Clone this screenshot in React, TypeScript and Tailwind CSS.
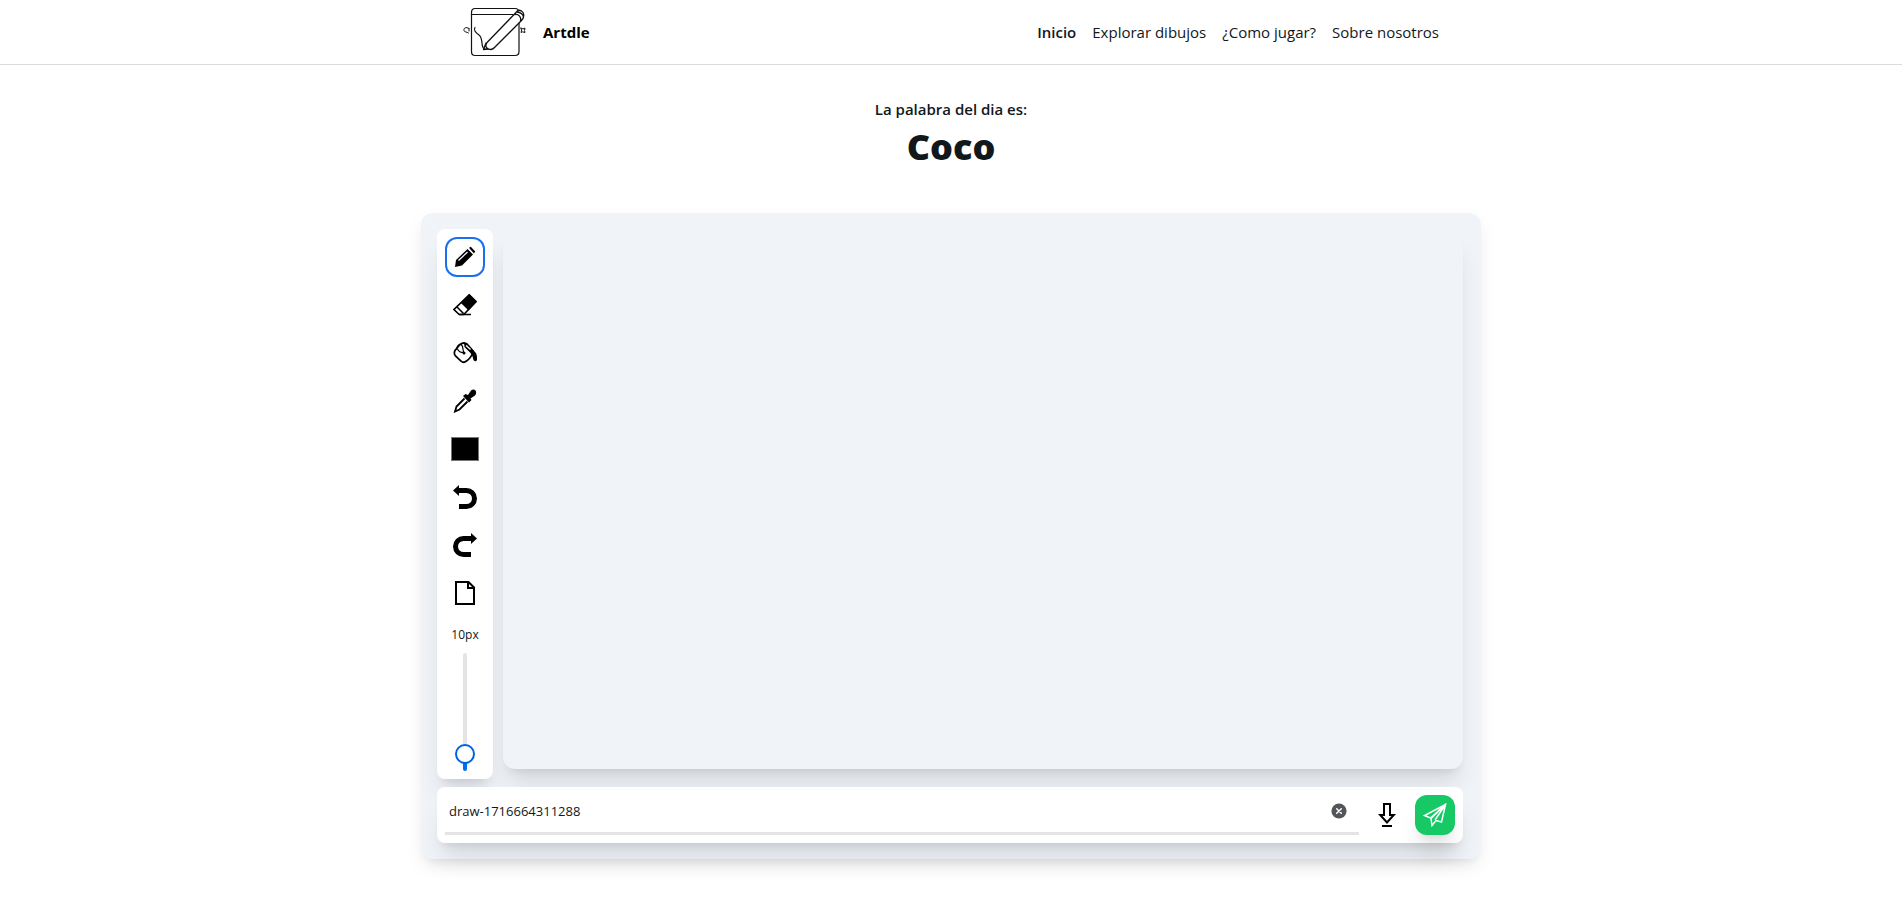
import { useState } from "react";
import type { ReactNode } from "react";

const links = ["Inicio", "Explorar dibujos", "¿Como jugar?", "Sobre nosotros"];

function Icon({ children }: { children: ReactNode }) {
  return (
    <svg viewBox="0 0 24 24" className="size-6" fill="none" stroke="currentColor" aria-hidden="true">
      {children}
    </svg>
  );
}

function Logo() {
  return (
    <svg viewBox="0 0 64 56" className="h-14 w-16" fill="none" stroke="#111" strokeWidth="1.2" strokeLinecap="round" strokeLinejoin="round" aria-hidden="true">
      <path d="M12 4.500H52Q56 4.500 56 8.500V47.500Q56 51.500 52 51.500H12Q8.500 51.500 8.500 47.500V8.500Q8.500 4.500 12 4.500Z" />
      <path d="M8.500 10.500H50" />
      <path d="M12 23.500C10 26 13 29 16 31C20 34 18 40 20 43.500C20.500 45 22 45.500 24 45" />
      <path fill="#fff" stroke="none" d="M24 38.500L52 9.500C54 6 58 6 60 9C61.500 12 60.500 14 58.500 16L31 43C29 45.500 26 45 22 45.500Z" />
      <path d="M24.500 38L53 8.500C54.500 5.500 58 5.500 60 8.500C61.800 12 60.500 14.500 58 17L31.500 43.500C29 46.500 24 46 23 42.500C22.500 40.500 23 39.500 24.500 38ZM23 39L20.500 45.500L25 45M51.500 10.500C55.500 9.500 58.500 13 57.500 17M54 8C57.500 8 60.500 11 60.500 13.500" strokeWidth="1.300" />
      <path d="M6 24.500C3 22.500 .500 24 1 26.500C1.500 28.500 3.500 27.500 5.500 29M6 24.500V27M58 24L60 25L62 24L61.500 26.500L62 28.500L59.500 27.800L58 28.500L58.500 26.500Z" strokeWidth="1" />
    </svg>
  );
}

const tools: { name: string; icon: ReactNode }[] = [
  {
    name: "Lápiz",
    icon: (
      <Icon>
        <path d="M2 22L3 15L14.500 4L20 9.500L9 20.500Z" fill="currentColor" stroke="none" />
        <path d="M16 2.800L17.800 1.800L22.200 6.500L21 8.500Z" fill="currentColor" stroke="none" />
        <path d="M5.500 15.500L14.500 7" stroke="#fff" strokeWidth="1.200" />
      </Icon>
    ),
  },
  {
    name: "Borrador",
    icon: (
      <Icon>
        <path d="M16.200 1.800L23 8.600L10.800 21.500H6.200L1 16.500Z" strokeWidth="1.600" />
        <path d="M16.200 1L24 8.600L15.500 17.500L7.700 9.800Z" fill="currentColor" stroke="none" />
        <path d="M4 14L10.500 20.500M6 21.500H18" strokeWidth="1.500" />
      </Icon>
    ),
  },
  {
    name: "Rellenar",
    icon: (
      <Icon>
        <path d="M7 3.500Q11 .500 14.500 3.500L20.500 10.500Q18 17 13.500 20Q10.500 22.500 8 20L2.500 15Q.500 12.500 2 9.500Z" strokeWidth="1.700" />
        <path d="M3.500 8.500C4.500 3 8 2 9.500 5.500L10.500 11M4.500 8C6 11 9 12 12 11.500" strokeWidth="1.200" />
        <path d="M11 1.500L23 12Q24.500 16 24 19Q22.500 21.500 20.500 19Q20 15 17.500 12L11.500 6Z" fill="currentColor" stroke="none" />
        <circle cx="11" cy="12" r="1.500" fill="currentColor" stroke="none" />
        <path d="M13 4.500L17.500 8.500" stroke="#fff" strokeWidth="1.300" />
      </Icon>
    ),
  },
  {
    name: "Cuentagotas",
    icon: (
      <Icon>
        <path d="M15 6L18 1.500Q20.500-.500 22.500 1.500Q24 4 22 6.500L17.500 9.500L18.500 11L16 13.500L10 7L12.500 5Z" fill="currentColor" stroke="none" />
        <path d="M11.500 9.500L3.500 17.500L2 22.500L6.500 20.500L14.500 12.500" strokeWidth="1.800" />
      </Icon>
    ),
  },
];

const actions: { name: string; icon: ReactNode }[] = [
  {
    name: "Deshacer",
    icon: (
      <Icon>
        <path d="M4 5.500H13.500A8 8 0 0 1 13.500 21.500H6" strokeWidth="5" />
        <path d="M0 5.500L6 0V11Z" fill="currentColor" stroke="none" />
      </Icon>
    ),
  },
  {
    name: "Rehacer",
    icon: (
      <Icon>
        <path d="M20 5.500H10.500A8 8 0 0 0 10.500 21.500H18" strokeWidth="5" />
        <path d="M24 5.500L18 0V11Z" fill="currentColor" stroke="none" />
      </Icon>
    ),
  },
  {
    name: "Nueva hoja",
    icon: (
      <Icon>
        <path d="M3 1H15.500L21 6.500V23H3ZM15 1V7H21" strokeWidth="2" />
      </Icon>
    ),
  },
];

const toolButton = "flex size-10 items-center justify-center rounded-xl text-black";

export default function App() {
  const [tool, setTool] = useState("Lápiz");
  const [color, setColor] = useState("#000000");
  const [size, setSize] = useState(10);
  const [name, setName] = useState("draw-1716664311288");

  return (
    <div className="min-h-screen bg-white font-['Segoe_UI','Open_Sans',sans-serif] text-[#11181c]">
      <header className="border-b border-[#dcdcdd]">
        <div className="mx-auto flex h-16 max-w-5xl items-center justify-between px-6">
          <a href="#inicio" className="flex items-center gap-4 text-[15px] font-bold text-black">
            <Logo />
            Artdle
          </a>
          <nav className="flex gap-4 text-[15px]">
            {links.map((label, i) => (
              <a key={label} href="#inicio" className={i === 0 ? "font-semibold" : ""}>
                {label}
              </a>
            ))}
          </nav>
        </div>
      </header>

      <main className="flex flex-col items-center px-4 pt-8">
        <p className="text-[15px] leading-6 font-semibold">La palabra del dia es:</p>
        <h1 className="mt-1.5 text-4xl leading-10 font-extrabold">Coco</h1>

        <section className="mt-[46px] flex w-full max-w-[1060px] flex-col gap-2 rounded-xl bg-[#f0f4f9] py-4 pr-[18px] pl-4 shadow-[0_8px_18px_-1px_rgb(0_0_0/0.08),0_6px_10px_-6px_rgb(0_0_0/0.1)]">
          <div className="flex items-start gap-2.5">
            <div className="flex w-14 shrink-0 flex-col items-center gap-2 rounded-lg bg-white p-2 shadow-xl">
              {tools.map((t) => (
                <button
                  key={t.name}
                  type="button"
                  aria-label={t.name}
                  onClick={() => setTool(t.name)}
                  className={tool === t.name ? `${toolButton} border-2 border-[#1c70f0]` : toolButton}
                >
                  {t.icon}
                </button>
              ))}
              <div className="flex size-10 items-center justify-center">
                <input
                  type="color"
                  aria-label="Color"
                  value={color}
                  onChange={(e) => setColor(e.target.value)}
                  className="h-6 w-7 appearance-none bg-transparent p-0 [&::-webkit-color-swatch]:border-[#777] [&::-webkit-color-swatch]:rounded-none [&::-webkit-color-swatch-wrapper]:p-0"
                />
              </div>
              {actions.map((a) => (
                <button key={a.name} type="button" aria-label={a.name} className={toolButton}>
                  {a.icon}
                </button>
              ))}
              <label htmlFor="grosor" className="pt-1 text-xs leading-5">
                {size}px
              </label>
              <input
                id="grosor"
                type="range"
                min={3}
                max={100}
                value={size}
                onChange={(e) => setSize(Number(e.target.value))}
                className="h-[118px] w-5 appearance-none bg-transparent [direction:rtl] [writing-mode:vertical-lr] [&::-webkit-slider-runnable-track]:w-1 [&::-webkit-slider-runnable-track]:rounded-full [&::-webkit-slider-runnable-track]:bg-[linear-gradient(to_top,#006fee_14%,#e4e4e7_14%)] [&::-webkit-slider-thumb]:-ml-2 [&::-webkit-slider-thumb]:size-5 [&::-webkit-slider-thumb]:appearance-none [&::-webkit-slider-thumb]:rounded-full [&::-webkit-slider-thumb]:border-2 [&::-webkit-slider-thumb]:border-[#0060e6] [&::-webkit-slider-thumb]:bg-white"
              />
            </div>
            <canvas width={960} height={540} className="aspect-video min-w-0 flex-1 rounded-xl bg-[#f0f4f9] shadow-xl" />
          </div>

          <form className="flex gap-2 rounded-lg bg-white p-2 shadow-xl" onSubmit={(e) => e.preventDefault()}>
            <div className="flex flex-1 items-start border-b-3 border-[#e4e4e7] pr-3 pl-1">
              <input
                aria-label="Nombre del dibujo"
                value={name}
                onChange={(e) => setName(e.target.value)}
                className="h-8 min-w-0 flex-1 bg-transparent text-[13px] outline-none"
              />
              <button type="button" aria-label="Borrar nombre" onClick={() => setName("")} className="my-2 size-4">
                <svg viewBox="0 0 16 16" className="size-4" aria-hidden="true">
                  <circle cx="8" cy="8" r="7.600" fill="#52565a" />
                  <path d="M5.700 5.700L10.300 10.300M10.300 5.700L5.700 10.300" stroke="#fff" strokeWidth="1.500" strokeLinecap="round" />
                </svg>
              </button>
            </div>
            <button type="button" aria-label="Descargar" className={toolButton}>
              <Icon>
                <path d="M9 1H15V12H18.800L12 19.500L5.200 12H9Z" strokeWidth="2" />
                <path d="M7 23H17" strokeWidth="2" />
              </Icon>
            </button>
            <button type="submit" aria-label="Enviar" className="flex size-10 items-center justify-center rounded-xl bg-[#17c964] text-white shadow-xl">
              <Icon>
                <path d="M22.500 1.500L1.500 12.500L7.500 15L22.500 1.500L18.500 19L13 17.500L9 22.500L8 15.500L22.500 1.500L12 17" strokeWidth="1.500" />
              </Icon>
            </button>
          </form>
        </section>
      </main>
    </div>
  );
}
